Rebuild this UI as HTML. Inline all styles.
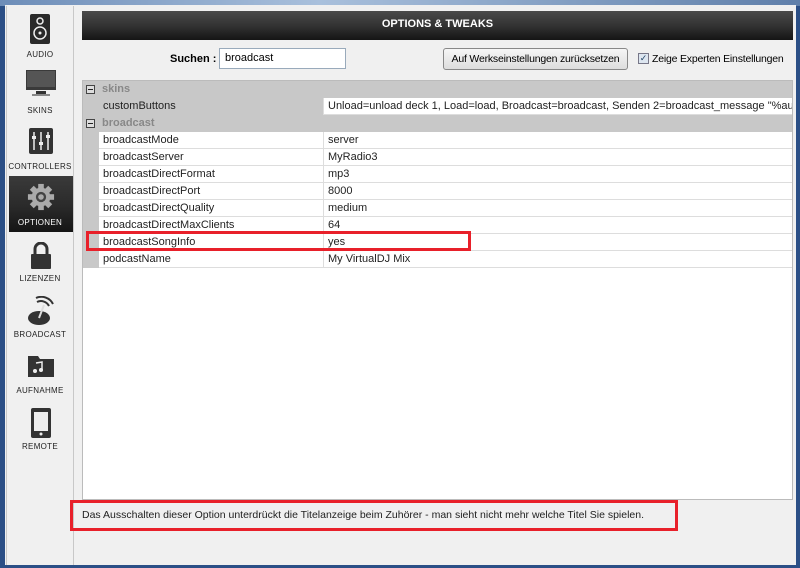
<!DOCTYPE html>
<html><head><meta charset="utf-8"><style>
*{margin:0;padding:0;box-sizing:border-box}
body{width:800px;height:568px;overflow:hidden;background:#2b4f86;font-family:"Liberation Sans",sans-serif;position:relative}
.top{position:absolute;left:0;top:0;width:800px;height:6px;background:linear-gradient(90deg,#6d8db8,#a9c0dc 40%,#5f7faa)}
.win{position:absolute;left:5px;top:5px;width:791px;height:560px;background:#f0f0f0}
.side{position:absolute;left:6px;top:6px;width:68px;height:559px;border-left:1px solid #c8c8c8;border-right:1px solid #c8c8c8;background:#f0f0f0}
.it{position:absolute;left:0;width:66px;text-align:center;font-size:8px;color:#222;letter-spacing:0.3px}
.sel{position:absolute;left:2px;top:170px;width:64px;height:56px;background:linear-gradient(#3a3a3a,#2a2a2a 55%,#151515)}
.hdr{position:absolute;left:82px;top:11px;width:711px;height:29px;background:linear-gradient(#4a4a4a,#333 50%,#151515);color:#fff;font-weight:bold;font-size:11px;text-align:center;line-height:26px}
.lbl{position:absolute;font-size:11px;white-space:nowrap}
.tbl{position:absolute;left:82px;top:80px;width:711px;height:420px;background:#fff;border:1px solid #bbb}
.row{position:absolute;left:0;width:709px;height:17px;font-size:11px;line-height:16px;color:#222}
.g{background:#c8c8c8}
.n{position:absolute;left:16px;width:224px;height:17px;background:#fff;border-bottom:1px solid #ddd;padding-left:4px}
.v{position:absolute;left:240px;right:0;height:17px;background:#fff;border-bottom:1px solid #ddd;border-left:1px solid #ddd;padding-left:4px;white-space:nowrap;overflow:hidden}
.box{position:absolute;left:3px;top:4px;width:9px;height:9px;border:1px solid #444;background:#ddd}
.box:after{content:"";position:absolute;left:1px;top:3px;width:5px;height:1px;background:#222}
.red{position:absolute;border:3px solid #e8202a}
</style></head><body>
<div class="top"></div>
<div class="win"></div>
<div class="side">
 <svg style="position:absolute;left:23px;top:8px" width="20" height="30"><rect width="20" height="30" rx="2" fill="#2a2a2a"/><circle cx="10" cy="7" r="3" fill="none" stroke="#eee" stroke-width="1.5"/><circle cx="10" cy="19" r="6" fill="none" stroke="#eee" stroke-width="1.5"/><circle cx="10" cy="19" r="1.5" fill="#eee"/></svg>
 <div class="it" style="top:44px">AUDIO</div>
 <svg style="position:absolute;left:19px;top:64px" width="30" height="30"><rect width="30" height="20" fill="#3a3a3a"/><rect x="1" y="1" width="28" height="16" fill="#555"/><rect x="10" y="21" width="10" height="3" fill="#333"/><rect x="6" y="24" width="18" height="2" fill="#888"/></svg>
 <div class="it" style="top:100px">SKINS</div>
 <svg style="position:absolute;left:22px;top:122px" width="24" height="26"><rect width="24" height="26" rx="2" fill="#333"/><g stroke="#eee" stroke-width="1.5"><path d="M5 4V22M12 4V22M19 4V22"/></g><g fill="#eee"><rect x="3" y="8" width="4" height="3"/><rect x="10" y="14" width="4" height="3"/><rect x="17" y="7" width="4" height="3"/></g></svg>
 <div class="it" style="top:156px">CONTROLLERS</div>
 <div class="sel"></div>
 <svg style="position:absolute;left:20px;top:177px" width="28" height="28" viewBox="0 0 30 30"><g fill="#aaa"><circle cx="15" cy="15" r="10"/><rect x="12" y="1" width="6" height="28"/><rect x="12" y="1" width="6" height="28" transform="rotate(45 15 15)"/><rect x="12" y="1" width="6" height="28" transform="rotate(90 15 15)"/><rect x="12" y="1" width="6" height="28" transform="rotate(135 15 15)"/></g><circle cx="15" cy="15" r="5.5" fill="#444"/><circle cx="15" cy="15" r="3" fill="#aaa"/></svg>
 <div class="it" style="top:212px;color:#fff">OPTIONEN</div>
 <svg style="position:absolute;left:23px;top:236px" width="22" height="28"><path d="M5 12V7a6 6 0 0 1 12 0v5" fill="none" stroke="#333" stroke-width="3"/><rect x="1" y="12" width="20" height="15" rx="1" fill="#333"/></svg>
 <div class="it" style="top:268px">LIZENZEN</div>
 <svg style="position:absolute;left:20px;top:290px" width="28" height="30"><ellipse cx="12" cy="22" rx="11" ry="7" fill="#333"/><path d="M12 22L17 9" stroke="#ddd" stroke-width="2"/><path d="M10 6a9 9 0 0 1 12 4M9 2a13 13 0 0 1 17 6" fill="none" stroke="#333" stroke-width="2"/></svg>
 <div class="it" style="top:324px">BROADCAST</div>
 <svg style="position:absolute;left:20px;top:348px" width="28" height="24"><path d="M1 2h10l2 3h14v18H1z" fill="#333"/><path d="M9 9l6-1v8" fill="none" stroke="#eee" stroke-width="1.5"/><circle cx="8" cy="17" r="2" fill="#eee"/><circle cx="14" cy="16" r="2" fill="#eee"/></svg>
 <div class="it" style="top:380px">AUFNAHME</div>
 <svg style="position:absolute;left:24px;top:402px" width="20" height="30"><rect width="20" height="30" rx="2" fill="#333"/><rect x="3" y="4" width="14" height="19" fill="#eee"/><circle cx="10" cy="26" r="1.5" fill="#eee"/></svg>
 <div class="it" style="top:436px">REMOTE</div>
</div>
<div class="hdr">OPTIONS &amp; TWEAKS</div>
<div class="lbl" style="left:170px;top:53px;font-weight:bold">Suchen :</div>
<div style="position:absolute;left:219px;top:48px;width:127px;height:21px;border:1px solid #9ab;background:#fff;font-size:11px;padding:3px 5px">broadcast</div>
<div style="position:absolute;left:443px;top:48px;width:185px;height:22px;border:1px solid #888;border-radius:3px;background:linear-gradient(#f6f6f6,#ddd);font-size:10.5px;letter-spacing:-0.2px;white-space:nowrap;text-align:center;line-height:20px">Auf Werkseinstellungen zurücksetzen</div>
<div style="position:absolute;left:638px;top:53px;width:11px;height:11px;border:1px solid #778;background:#dde6f0;font-size:9px;color:#246;line-height:9px;text-align:center">✓</div>
<div class="lbl" style="left:652px;top:53px;font-size:10.5px;letter-spacing:-0.2px">Zeige Experten Einstellungen</div>
<div class="tbl">
 <div class="row g" style="top:0"><div class="box"></div><span style="position:absolute;left:19px;font-weight:bold;color:#888">skins</span></div>
 <div class="row g" style="top:17px"><span style="position:absolute;left:20px">customButtons</span><div class="v">Unload=unload deck 1, Load=load, Broadcast=broadcast, Senden 2=broadcast_message "%author</div></div>
 <div class="row g" style="top:34px"><div class="box"></div><span style="position:absolute;left:19px;font-weight:bold;color:#888">broadcast</span></div>
 <div class="row g" style="top:51px"><div class="n">broadcastMode</div><div class="v">server</div></div>
 <div class="row g" style="top:68px"><div class="n">broadcastServer</div><div class="v">MyRadio3</div></div>
 <div class="row g" style="top:85px"><div class="n">broadcastDirectFormat</div><div class="v">mp3</div></div>
 <div class="row g" style="top:102px"><div class="n">broadcastDirectPort</div><div class="v">8000</div></div>
 <div class="row g" style="top:119px"><div class="n">broadcastDirectQuality</div><div class="v">medium</div></div>
 <div class="row g" style="top:136px"><div class="n">broadcastDirectMaxClients</div><div class="v">64</div></div>
 <div class="row g" style="top:153px"><div class="n">broadcastSongInfo</div><div class="v">yes</div></div>
 <div class="row g" style="top:170px"><div class="n">podcastName</div><div class="v">My VirtualDJ Mix</div></div>
</div>
<div class="red" style="left:86px;top:231px;width:385px;height:20px"></div>
<div class="red" style="left:70px;top:500px;width:608px;height:31px"></div>
<div class="lbl" style="left:82px;top:509px;font-size:10.5px;color:#222">Das Ausschalten dieser Option unterdrückt die Titelanzeige beim Zuhörer - man sieht nicht mehr welche Titel Sie spielen.</div>
</body></html>
